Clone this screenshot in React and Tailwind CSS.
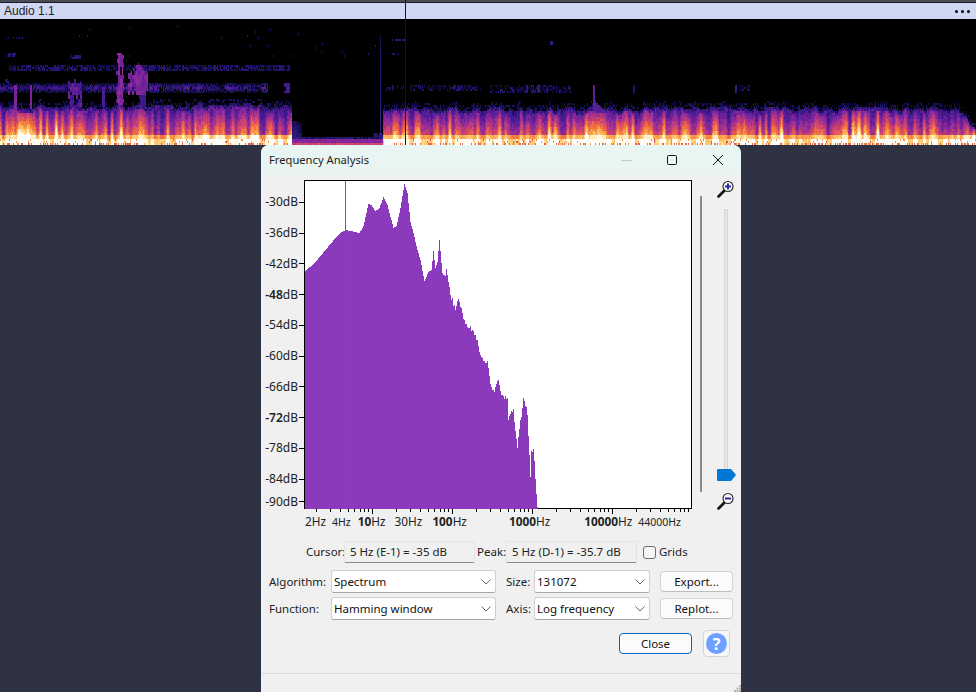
import React, { useMemo } from "react";

const FONT = "font-['Noto_Sans',sans-serif]";

const hash = (a, b) => {
  const v = Math.sin(a * 127.1 + b * 311.7) * 43758.5453;
  return v - Math.floor(v);
};
const smooth = (x, seed) => {
  const i = Math.floor(x);
  const f = x - i;
  const u = f * f * (3 - 2 * f);
  return hash(i, seed) * (1 - u) + hash(i + 1, seed) * u;
};

const STOPS = [
  [0, [0, 0, 4]],
  [0.1, [27, 20, 100]],
  [0.25, [74, 26, 150]],
  [0.4, [143, 42, 154]],
  [0.55, [208, 68, 110]],
  [0.68, [244, 112, 60]],
  [0.8, [252, 174, 80]],
  [0.9, [253, 229, 154]],
  [1, [255, 255, 255]],
];
const colour = (t) => {
  for (let i = 1; i < STOPS.length; i++) {
    if (t <= STOPS[i][0]) {
      const [a, ca] = STOPS[i - 1];
      const [b, cb] = STOPS[i];
      const f = (t - a) / (b - a);
      return `rgb(${ca.map((c, k) => Math.round(c + (cb[k] - c) * f)).join(",")})`;
    }
  }
  return "rgb(255,255,255)";
};

const inBox = (x, sy, x0, x1, y0, y1) => x >= x0 && x <= x1 && sy >= y0 && sy <= y1;

function energy(x, y) {
  const sy = y + 19;
  const h = 126 - y;
  const n = hash(x, y);
  const c = hash(Math.floor(x / 2), Math.floor(y / 4) + 50);
  const burst = Math.pow(smooth(x / 3.1, 1), 1.3) * 0.68 + smooth(x / 11, 2) * 0.32;
  let e = 0;
  if (x < 292 || x >= 383) {
    let top = (x < 292 ? 40 : 37) + 6 * (smooth(x / 5, 5) - 0.5);
    if (x > 958) top = Math.max(14, top - (x - 958) * 1.2);
    if (x > 272 && x < 292) top -= (x - 272) * 0.06;
    const dim = x > 195 && x < 292 ? 0.85 : x > 940 ? 0.8 : 1;
    if (h < 7) {
      e = 0.96 + 0.08 * n - (burst < 0.3 ? 0.14 : 0) - (n > 0.95 ? 0.3 : 0);
      if (h < 3 && hash(x, 77) > 0.72) e = 0.66;
    } else if (h < 12) {
      e = 0.9 * (0.72 + 0.5 * burst) + (n - 0.5) * 0.05;
    } else if (h <= top + 5) {
      const frac = (h - 12) / (top - 12);
      e = (0.74 - 0.46 * frac) * (0.42 + 1.05 * burst) * dim + (n - 0.5) * 0.12;
      if (frac > 0.85) e = Math.min(e, 0.3 - (frac - 0.85) * 1.1) * (0.4 + n);
      if (frac > 1) e = n > 0.6 ? 0.11 * n : 0;
    }
  } else {
    if (h < 3) e = 0.5 + 0.1 * n;
    else if (h < 7) e = 0.34 + 0.06 * n;
    else if (h < 10) e = n > 0.35 ? 0.14 : 0.05;
    if (x < 302 && h < 26) e = Math.max(e, (0.3 - (x - 292) * 0.02) * (1 - h / 32) * (n + 0.5));
    if (x > 372 && h < 14) e = Math.max(e, 0.22 * n);
  }
  const spot = (v) => {
    e = Math.max(e, v);
  };
  const d87 = Math.abs(sy - 87);
  if (x < 268 && d87 < 4.5 && n > 0.18) spot((0.1 + 0.22 * smooth(x / 6, 3)) * (1 - d87 / 6));
  if (x < 290 && x > 8 && Math.abs(sy - 67) < 2.5 && n > 0.3) spot(0.05 + 0.11 * smooth(x / 5, 4));
  if (inBox(x, sy, 115 + 3 * c, 124 - 2 * c, 52, 103) && c > 0.1) spot(0.3 + 0.14 * c);
  if (inBox(x, sy, 128, 147, 61 + Math.abs(x - 138) * 1.1 + 2 * c, 94) && c > 0.12) spot(0.26 + 0.14 * c);
  if (inBox(x, sy, 68, 81, 78 + Math.abs(x - 74) * 0.5, 105) && c > 0.3) spot(0.14 + 0.2 * c);
  if (inBox(x, sy, 14, 16, 84, 108)) spot(0.34);
  if (inBox(x, sy, 30, 31, 84, 108)) spot(0.36);
  if (inBox(x, sy, 102, 104, 87, 106)) spot(0.26);
  if (inBox(x, sy, 117, 121, 95, 106) && c > 0.3) spot(0.22);
  if (inBox(x, sy, 139, 145, 92, 106) && c > 0.3) spot(0.2);
  if (inBox(x, sy, 284, 289, 82, 92) && c > 0.2) spot(0.22);
  if (inBox(x, sy, 6, 16, 52, 56) && n > 0.3) spot(0.15);
  if (inBox(x, sy, 70, 80, 54, 57) && n > 0.3) spot(0.15);
  if (inBox(x, sy, 6, 22, 36, 38) && n > 0.5) spot(0.1);
  if (inBox(x, sy, 5, 8, 78, 90) && n > 0.3) spot(0.12);
  if (x === 380 && sy > 33 && sy < 135) spot(0.07 + (0.14 * (sy - 33)) / 100);
  if (inBox(x, sy, 392, 405, 38, 40) && n > 0.2) spot(0.15);
  if (inBox(x, sy, 392, 400, 52, 54) && n > 0.5) spot(0.1);
  if (inBox(x, sy, 386, 406, 84, 90) && n > 0.7) spot(0.11);
  if (inBox(x, sy, 410, 480, 84, 90) && n > 0.55) spot(0.05 + 0.1 * smooth(x / 8, 6));
  if (inBox(x, sy, 490, 570, 84, 91) && n > 0.55) spot(0.06 + 0.1 * smooth(x / 5, 7));
  if (inBox(x, sy, 526, 527, 84, 91)) spot(0.16);
  if (inBox(x, sy, 537, 539, 84, 91)) spot(0.18);
  if (inBox(x, sy, 550, 552, 40, 44)) spot(0.2);
  if (inBox(x, sy, 593, 594, 84, 108)) spot(0.3);
  if (inBox(x, sy, 594, 604, 100 + (x - 594), 118)) spot(0.28);
  if (inBox(x, sy, 633, 634, 84, 91)) spot(0.13);
  if (inBox(x, sy, 735, 736, 84, 92)) spot(0.2);
  if (inBox(x, sy, 740, 752, 85, 90) && n > 0.6) spot(0.1);
  if (sy < 60 && sy > 22 && x < 380 && hash(x * 3, y * 7) > 0.996) spot(0.13);
  return Math.min(1, Math.max(0, e));
}

function Spectrogram() {
  const paths = useMemo(() => {
    const buckets = new Map();
    const levels = 40;
    for (let x = 0; x < 976; x += 1) {
      for (let y = 0; y < 126; y += 2) {
        const e = energy(x, y);
        if (e < 0.03) continue;
        const q = Math.round(e * levels);
        if (!buckets.has(q)) buckets.set(q, []);
        buckets.get(q).push(`M${x} ${y}h1v2h-1z`);
      }
    }
    return [...buckets.entries()].map(([q, d]) => ({ fill: colour(q / levels), d: d.join("") }));
  }, []);
  return (
    <svg width="976" height="126" viewBox="0 0 976 126" shapeRendering="crispEdges" className="block bg-black">
      {paths.map((p) => (
        <path key={p.fill} d={p.d} fill={p.fill} />
      ))}
    </svg>
  );
}

const PROFILE = [
  [304, 272], [315, 262], [325, 250], [335, 238], [340, 233], [345, 230], [350, 231], [359, 233], [363, 226], [368, 204], [371, 205], [375, 211], [379, 208],
  [383, 197], [387, 205], [393, 228], [396, 226], [400, 208], [404, 184], [407, 193], [410, 222], [413, 233],
  [417, 250], [420, 260], [424, 281], [428, 272], [431, 270], [433, 251], [435, 268], [437, 262], [439, 240],
  [442, 272], [445, 277], [446, 268], [448, 285], [453, 305], [455, 310], [458, 299], [463, 318], [468, 328],
  [473, 330], [477, 340], [480, 357], [484, 360], [487, 362], [490, 387], [494, 390], [498, 380], [502, 398],
  [507, 400], [508, 420], [513, 410], [517, 448], [519, 428], [523, 400], [527, 413], [530, 475], [531, 452],
  [533, 450], [535, 477], [537, 508],
];

function profileAt(x) {
  for (let i = 1; i < PROFILE.length; i++) {
    if (x <= PROFILE[i][0]) {
      const [a, ya] = PROFILE[i - 1];
      const [b, yb] = PROFILE[i];
      return ya + ((yb - ya) * (x - a)) / (b - a);
    }
  }
  return 509;
}

function Plot() {
  const d = useMemo(() => {
    let s = "";
    for (let x = 305; x < 538; x++) {
      const jitter = x > 440 ? (hash(x, 9) - 0.5) * 6 : 0;
      const y = Math.round(profileAt(x) + jitter);
      s += `M${x} ${y}V509H${x + 1}V${y}Z`;
    }
    return s;
  }, []);
  const ticks = [];
  for (let dec = 0; dec < 5; dec++) {
    for (let m = 1; m < 10; m++) {
      const x = Math.round(292 + 80 * (dec + Math.log10(m)));
      if (x >= 304 && x <= 691) ticks.push([x, m === 1]);
    }
  }
  return (
    <svg width="388" height="335" viewBox="304 180 388 335" shapeRendering="crispEdges" className="block shrink-0">
      <rect x="304.5" y="180.5" width="387" height="328" fill="#fff" stroke="#000" />
      <path d={d} fill="#8b3abb" />
      <line x1="345.5" y1="181" x2="345.5" y2="508" stroke="#d8304c" strokeWidth="1" />
      {ticks.map(([x, major]) => (
        <line key={x} x1={x + 0.5} x2={x + 0.5} y1="509" y2={major ? 514 : 512} stroke="#000" />
      ))}
    </svg>
  );
}

const Y_LABELS = [
  ["-30"], ["-36"], ["-42"], ["-48", true], ["-54"], ["-60"], ["-66"], ["-72", true], ["-78"], ["-84"],
];

function YLabel({ v, strong, cls }) {
  return (
    <div className={`flex items-center justify-end ${cls}`}>
      <span className="pr-[1px]">
        <span className={strong ? "font-semibold" : ""}>{v}</span>dB
      </span>
      <span className="block h-px w-[5px] bg-black" />
    </div>
  );
}

function YAxis() {
  return (
    <div className="flex h-[329px] w-[43px] shrink-0 flex-col pt-[7px] text-[12px] text-[#222]">
      {Y_LABELS.map(([v, strong]) => (
        <YLabel key={v} v={v} strong={strong} cls="h-[30.75px] shrink-0" />
      ))}
      <YLabel v="-90" cls="h-[15px] shrink-0 mt-[-0.5px]" />
    </div>
  );
}

function HzLabel({ num, bold, small, ml }) {
  return (
    <span className={`${ml} shrink-0 whitespace-nowrap ${small ? "text-[10.5px]" : "text-[11.8px]"}`}>
      <span className={bold ? "font-bold" : ""}>{num}</span>Hz
    </span>
  );
}

function ZoomIcon({ minus }) {
  return (
    <svg width="17" height="18" viewBox="0 0 17 18" className="block">
      <path d="M7 11 L1.500 16.500" stroke="#111" strokeWidth="2.600" strokeLinecap="round" />
      <circle cx="11" cy="6.500" r="5" fill="#f8f8f8" stroke="#222" strokeWidth="1.100" />
      {minus ? (
        <path d="M8 6.500h6" stroke="#2a2aa8" strokeWidth="2" />
      ) : (
        <path d="M8 6.500h6M11 3.500v6" stroke="#2a2aa8" strokeWidth="2" />
      )}
    </svg>
  );
}

function SideControls() {
  return (
    <div className="flex">
      <div className="ml-[8px] mt-[16px] h-[296px] w-[2px] bg-[#8a8a8a]" />
      <div className="ml-[15px] flex w-[19px] flex-col items-start">
        <ZoomIcon />
        <div className="ml-[7px] mt-[11px] h-[260px] w-[4px] border-x border-t border-[#d6d6d6] bg-[#e6e6e6]" />
        <svg width="19" height="12" viewBox="0 0 19 12" className="block">
          <path d="M1 0H14L19 6L14 12H1Q0 12 0 11V1Q0 0 1 0Z" fill="#0078d4" />
        </svg>
        <div className="mt-[11px]">
          <ZoomIcon minus />
        </div>
      </div>
    </div>
  );
}

function Readout({ text, cls }) {
  return (
    <div className={`flex h-[22px] items-center rounded-[2px] border border-[#e4e4e4] border-b-[#8c8c8c] bg-[#f0f0f0] pl-[5px] text-[11.5px] text-[#222] ${cls}`}>
      {text}
    </div>
  );
}

function Select({ text, cls }) {
  return (
    <div className={`flex h-[23px] items-center justify-between rounded-[3px] border border-[#d0d0d0] border-b-[#a8a8a8] bg-white pl-[2px] pr-[4px] text-[11.5px] text-[#111] ${cls}`}>
      <span>{text}</span>
      <svg width="10" height="6" viewBox="0 0 10 6">
        <path d="M0.500 0.500L5 5L9.500 0.500" fill="none" stroke="#666" strokeWidth="1" />
      </svg>
    </div>
  );
}

function Btn({ text }) {
  return (
    <div className="ml-[10px] flex h-[21px] w-[73px] items-center justify-center rounded-[4px] border border-[#d4d4d4] border-b-[#bdbdbd] bg-[#fbfbfb] text-[11.5px] text-[#111]">
      {text}
    </div>
  );
}

function Dialog() {
  return (
    <div className={`ml-[261px] flex h-[547px] w-[480px] flex-col overflow-hidden rounded-t-[8px] bg-[#f0f0f0] ${FONT}`}>
      <div className="flex h-[30px] shrink-0 items-center bg-[#e8f5f2] pl-[8px] text-[11.2px] text-[#1c1c1c]">
        <span className="w-[352px]">Frequency Analysis</span>
        <svg width="11" height="1" viewBox="0 0 11 1" className="block">
          <rect width="11" height="1" fill="#c4cccb" />
        </svg>
        <svg width="10" height="10" viewBox="0 0 10 10" className="ml-[35px] block">
          <rect x="0.500" y="0.500" width="9" height="9" rx="1" fill="none" stroke="#111" />
        </svg>
        <svg width="10" height="10" viewBox="0 0 10 10" className="ml-[36px] block">
          <path d="M0 0L10 10M10 0L0 10" stroke="#111" strokeWidth="1" />
        </svg>
      </div>

      <div className="flex pt-[5px]">
        <YAxis />
        <Plot />
        <SideControls />
      </div>

      <div className="flex h-[14px] items-center pl-[44px] leading-none text-[#222]">
        <HzLabel num="2" />
        <HzLabel num="4" small ml="ml-[6px]" />
        <HzLabel num="10" bold ml="ml-[7px]" />
        <HzLabel num="30" ml="ml-[9px]" />
        <HzLabel num="100" bold ml="ml-[10px]" />
        <HzLabel num="1000" bold ml="ml-[42px]" />
        <HzLabel num="10000" bold ml="ml-[34px]" />
        <HzLabel num="44000" small ml="ml-[6px]" />
      </div>

      <div className="mt-[12px] flex h-[22px] items-center pl-[45px] text-[11.5px] text-[#222]">
        <span className="w-[38px]">Cursor:</span>
        <Readout text="5 Hz (E-1) = -35 dB" cls="w-[131px]" />
        <span className="ml-[2px] w-[29px]">Peak:</span>
        <Readout text="5 Hz (D-1) = -35.7 dB" cls="w-[131px]" />
        <span className="ml-[6px] h-[13px] w-[13px] rounded-[3px] border border-[#6e6e6e] bg-[#f6f6f6]" />
        <span className="ml-[3px]">Grids</span>
      </div>

      <div className="mt-[7px] flex h-[23px] items-center pl-[8px] text-[11.5px] text-[#222]">
        <span className="w-[62px]">Algorithm:</span>
        <Select text="Spectrum" cls="w-[165px]" />
        <span className="ml-[10px] w-[28px]">Size:</span>
        <Select text="131072" cls="w-[116px]" />
        <Btn text="Export..." />
      </div>

      <div className="mt-[4px] flex h-[23px] items-center pl-[8px] text-[11.5px] text-[#222]">
        <span className="w-[62px]">Function:</span>
        <Select text="Hamming window" cls="w-[165px]" />
        <span className="ml-[10px] w-[28px]">Axis:</span>
        <Select text="Log frequency" cls="w-[116px]" />
        <Btn text="Replot..." />
      </div>

      <div className="mt-[10px] flex h-[27px] items-center justify-end pr-[11px]">
        <div className="mr-[11px] flex h-[21px] w-[73px] items-center justify-center rounded-[4px] border border-[#0067c0] bg-[#fbfbfb] text-[11.5px] text-[#111]">
          Close
        </div>
        <div className="flex h-[27px] w-[27px] items-center justify-center rounded-[4px] border border-[#d4d4d4] bg-[#f7f7f7]">
          <span className="flex h-[21px] w-[21px] items-center justify-center rounded-full bg-[#6ea1ff] text-[16px] font-bold leading-none text-white">
            ?
          </span>
        </div>
      </div>

      <div className="mt-[16px] flex flex-1 items-end justify-end border-t border-[#dcdcdc]">
        <svg width="7" height="7" viewBox="0 0 7 7" className="block">
          <path d="M5 0h2v2H5zM2.500 2.500h2v2h-2zM5 2.500h2v2H5zM0 5h2v2H0zM2.500 5h2v2h-2zM5 5h2v2H5z" fill="#b4b4b4" />
        </svg>
      </div>
    </div>
  );
}

export default function App() {
  return (
    <div className="h-[692px] w-[976px] overflow-hidden bg-[#2e3243]">
      <div className="relative">
        <div className="h-[2px] bg-[#4a4c56]" />
        <div className="h-px bg-[#1c1c22]" />
        <div className="flex h-[16px] items-center justify-between bg-[#cfd7f2] pl-[4px] pr-[6px] font-['Liberation_Sans',sans-serif] text-[12px] leading-none text-[#222]">
          <span>Audio 1.1</span>
          <div className="flex gap-[3px]">
            <span className="h-[3px] w-[3px] rounded-full bg-black" />
            <span className="h-[3px] w-[3px] rounded-full bg-black" />
            <span className="h-[3px] w-[3px] rounded-full bg-black" />
          </div>
        </div>
        <Spectrogram />
        <div className="absolute left-[405px] top-0 h-[145px] w-px bg-[#14141c]" />
      </div>
      <Dialog />
    </div>
  );
}
